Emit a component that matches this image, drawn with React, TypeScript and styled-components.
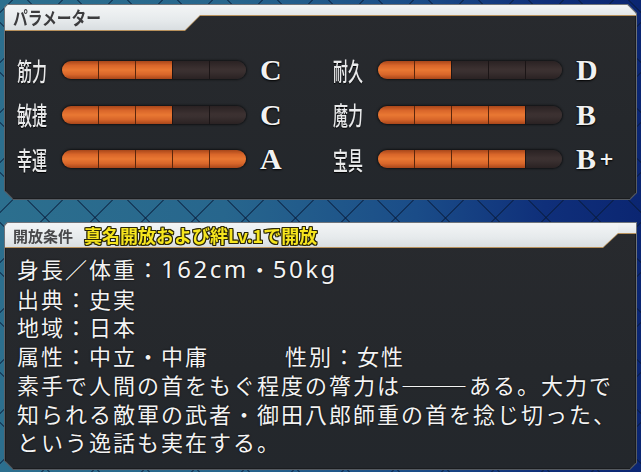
import React from "react";
import styled, { createGlobalStyle } from "styled-components";

const Global = createGlobalStyle`
  html, body { margin: 0; padding: 0; }
  body {
    width: 641px;
    height: 472px;
    overflow: hidden;
    background-color: #1b4f86;
    background-image:
      repeating-linear-gradient(45deg, transparent 0 34px, rgba(8, 26, 56, 0.55) 34px 35.4px),
      repeating-linear-gradient(-45deg, transparent 0 34px, rgba(8, 26, 56, 0.55) 34px 35.4px),
      linear-gradient(90deg, #2c6f8e 0%, #27668d 35%, #1a4c88 65%, #0f2f7a 85%, #0b2672 100%);
    font-family: "Noto Sans CJK JP", "Noto Sans", sans-serif;
  }
`;

const Page = styled.div`
  display: flex;
  flex-direction: column;
  gap: 22px;
  padding: 4px 4px 6px 4px;
`;

const Frame = styled.div<{ $h: number; $tr: number; $tl: number }>`
  height: ${(p) => p.$h}px;
  padding: 1px;
  background: linear-gradient(180deg, #70757b, #555a60);
  clip-path: polygon(
    ${(p) => p.$tl}px 0,
    calc(100% - ${(p) => p.$tr}px) 0,
    100% ${(p) => p.$tr}px,
    100% calc(100% - 7px),
    calc(100% - 7px) 100%,
    9px 100%,
    0 calc(100% - 9px),
    0 ${(p) => p.$tl}px
  );
`;

const Inner = styled.div<{ $tr: number; $tl: number }>`
  height: 100%;
  display: flex;
  flex-direction: column;
  background: linear-gradient(180deg, #282a2e 0%, #25282c 60%, #23272c 100%);
  clip-path: polygon(
    ${(p) => p.$tl}px 0,
    calc(100% - ${(p) => p.$tr}px) 0,
    100% ${(p) => p.$tr}px,
    100% calc(100% - 6.5px),
    calc(100% - 6.5px) 100%,
    8.5px 100%,
    0 calc(100% - 8.5px),
    0 ${(p) => p.$tl}px
  );
  box-shadow: inset 0 0 0 1px #1a1c1f;
`;

const HeaderRow = styled.div<{ $h: number }>`
  display: flex;
  align-items: flex-start;
  height: ${(p) => p.$h}px;
  flex: none;
  filter: drop-shadow(0 1.5px 0 #b8915c);
`;

const Tab = styled.div<{ $w: number }>`
  width: ${(p) => p.$w}px;
  height: 100%;
  flex: none;
  display: flex;
  align-items: center;
  padding-left: 8px;
  box-sizing: border-box;
  background: linear-gradient(180deg, #f3f5f6 0%, #e6eaec 60%, #d9dee1 100%);
  clip-path: polygon(0 0, 100% 0, 100% 10px, calc(100% - 15px) 100%, 0 100%);
`;

const Strip = styled.div`
  flex: 1;
  height: 10px;
  background: linear-gradient(180deg, #f3f5f6 0%, #e3e7ea 100%);
`;

const TabTitle = styled.span`
  display: inline-block;
  font-size: 18px;
  font-weight: 700;
  color: #3c3c3e;
  transform: scaleX(0.82);
  transform-origin: left center;
  white-space: nowrap;
  line-height: 1;
  margin-top: -2px;
`;

const CondTitle = styled.span`
  font-size: 15px;
  font-weight: 700;
  color: #48484a;
  white-space: nowrap;
  margin-right: 11px;
  line-height: 1;
`;

const CondText = styled.span`
  font-size: 18px;
  font-weight: 700;
  color: #f6e51e;
  white-space: nowrap;
  line-height: 1;
  text-shadow: 1px 0 0 #2a2608, -1px 0 0 #2a2608, 0 1px 0 #2a2608, 0 -1px 0 #2a2608,
    1px 1px 0 #2a2608, -1px -1px 0 #2a2608, 1px -1px 0 #2a2608, -1px 1px 0 #2a2608;
`;

const StatGrid = styled.div`
  display: grid;
  grid-template-columns: 316px 1fr;
  grid-auto-rows: 44.5px;
  padding: 18px 0 0 12px;
`;

const StatRow = styled.div`
  display: flex;
  align-items: center;
`;

const StatLabel = styled.div`
  width: 45px;
  flex: none;
  height: 30px;
  display: flex;
  align-items: center;
`;

const LabelText = styled.span`
  display: inline-block;
  font-size: 25px;
  font-weight: 500;
  color: #e9eaeb;
  transform: scaleX(0.6);
  transform-origin: left center;
  white-space: nowrap;
  line-height: 1;
  text-shadow: 0 1px 1px #000;
`;

const Bar = styled.div`
  width: 184px;
  height: 18px;
  flex: none;
  display: flex;
  border-radius: 9px;
  overflow: hidden;
  box-shadow: 0 0 2px 1px rgba(0, 0, 0, 0.55);
`;

const Seg = styled.div<{ $on: boolean }>`
  flex: 1;
  border-left: 1px solid ${(p) => (p.$on ? "#5a260c" : "#1b1516")};
  background: ${(p) =>
    p.$on
      ? "linear-gradient(180deg, #a8461a 0%, #d9662a 25%, #e97833 50%, #d8662a 75%, #a8461a 100%)"
      : "linear-gradient(180deg, #2a2223 0%, #3c3131 45%, #3a3030 60%, #2a2223 100%)"};
  &:first-child {
    border-left: none;
  }
`;

const Grade = styled.div`
  margin-left: 14px;
  display: flex;
  align-items: center;
  font-family: "Liberation Serif", "DejaVu Serif", serif;
  font-weight: 700;
  font-size: 30px;
  line-height: 1;
  color: #f1f1f1;
  text-shadow: 0 1px 2px #000, 0 0 1px #000;
`;

const Plus = styled.span`
  font-family: "DejaVu Sans", sans-serif;
  font-size: 18px;
  font-weight: 700;
  margin-left: 3px;
`;

const Body = styled.div`
  padding: 7px 0 0 12px;
  color: #f3f3f3;
  font-size: 22px;
  letter-spacing: 2px;
  line-height: 28.7px;
  text-shadow: 0 0 2px rgba(0, 0, 0, 0.9);
  white-space: nowrap;
`;

const Line = styled.div`
  display: flex;
  align-items: baseline;
`;

const Latin = styled.span`
  font-family: "Noto Sans", "Open Sans", sans-serif;
  font-size: 24px;
  letter-spacing: 2.5px;
`;

const Cell = styled.span<{ $w?: number }>`
  ${(p) => (p.$w ? `width: ${p.$w}px; flex: none;` : "")}
`;

const Dash = styled.span`
  letter-spacing: 0;
  margin-right: 2px;
`;

const stats = [
  { label: "筋力", value: 3, grade: "C" },
  { label: "耐久", value: 2, grade: "D" },
  { label: "敏捷", value: 3, grade: "C" },
  { label: "魔力", value: 4, grade: "B" },
  { label: "幸運", value: 5, grade: "A" },
  { label: "宝具", value: 4, grade: "B", plus: true },
];

export default function App() {
  return (
    <>
      <Global />
      <Page>
        <Frame $h={194} $tr={9} $tl={3}>
          <Inner $tr={8.5} $tl={2.5}>
            <HeaderRow $h={25}>
              <Tab $w={195}>
                <TabTitle>パラメーター</TabTitle>
              </Tab>
              <Strip />
            </HeaderRow>
            <StatGrid>
              {stats.map((s) => (
                <StatRow key={s.label}>
                  <StatLabel>
                    <LabelText>{s.label}</LabelText>
                  </StatLabel>
                  <Bar>
                    {[0, 1, 2, 3, 4].map((i) => (
                      <Seg key={i} $on={i < s.value} />
                    ))}
                  </Bar>
                  <Grade>
                    {s.grade}
                    {s.plus && <Plus>+</Plus>}
                  </Grade>
                </StatRow>
              ))}
            </StatGrid>
          </Inner>
        </Frame>
        <Frame $h={246} $tr={0} $tl={3}>
          <Inner $tr={0} $tl={2.5}>
            <HeaderRow $h={24}>
              <Tab $w={613}>
                <CondTitle>開放条件</CondTitle>
                <CondText>真名開放および絆Lv.1で開放</CondText>
              </Tab>
              <Strip />
            </HeaderRow>
            <Body>
              <Line>
                <span>身長／体重：</span>
                <Latin>162cm</Latin>
                <span>・</span>
                <Latin>50kg</Latin>
              </Line>
              <Line>出典：史実</Line>
              <Line>地域：日本</Line>
              <Line>
                <Cell $w={268}>属性：中立・中庸</Cell>
                <Cell>性別：女性</Cell>
              </Line>
              <Line>
                素手で人間の首をもぐ程度の膂力は<Dash>―――</Dash>ある。大力で
              </Line>
              <Line>知られる敵軍の武者・御田八郎師重の首を捻じ切った、</Line>
              <Line>という逸話も実在する。</Line>
            </Body>
          </Inner>
        </Frame>
      </Page>
    </>
  );
}
